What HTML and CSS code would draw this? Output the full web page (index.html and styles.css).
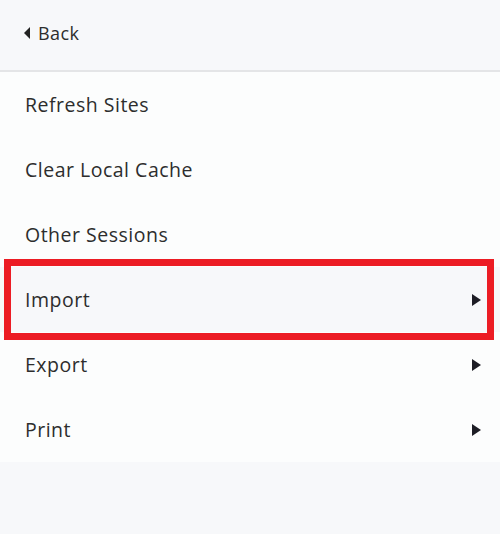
FILE: index.html
```html
<!DOCTYPE html>
<html>
<head>
<meta charset="utf-8">
<link rel="stylesheet" href="styles.css">
</head>
<body>
<div class="panel">
  <div class="header">
    <span class="back"><span class="tri-left"></span>Back</span>
  </div>
  <ul class="menu">
    <li class="item">Refresh Sites</li>
    <li class="item">Clear Local Cache</li>
    <li class="item">Other Sessions</li>
    <li class="item sub hover">Import<span class="tri-right"></span></li>
    <li class="item sub">Export<span class="tri-right"></span></li>
    <li class="item sub">Print<span class="tri-right"></span></li>
  </ul>
  <div class="highlight"></div>
</div>
</body>
</html>
```
FILE: styles.css
```css
html, body {
  margin: 0;
  padding: 0;
  background: #f7f8fa;
}
body {
  font-family: "Open Sans", "Noto Sans", sans-serif;
  color: #2d2d2d;
}
.panel {
  position: relative;
  width: 500px;
  height: 534px;
}
.header {
  box-sizing: border-box;
  border-bottom: 2px solid #e4e5e7;
  height: 72px;
  display: flex;
  align-items: center;
  padding-left: 24px;
  padding-bottom: 4px;
}
.back {
  display: flex;
  align-items: center;
  font-size: 18px;
  letter-spacing: 0.4px;
  color: #2d2d2d;
}
.tri-left {
  width: 0;
  height: 0;
  border-top: 6.5px solid transparent;
  border-bottom: 6.5px solid transparent;
  border-right: 6px solid #222;
  margin-right: 8px;
}
.menu {
  list-style: none;
  margin: 0;
  padding: 0;
  background: #fcfdfd;
}
.item {
  height: 65px;
  display: flex;
  align-items: center;
  justify-content: space-between;
  padding: 0 19px 0 25px;
  font-size: 19.5px;
  letter-spacing: 0.5px;
}
.item.hover {
  background: #f7f8fa;
}
.tri-right {
  width: 0;
  height: 0;
  border-top: 6.5px solid transparent;
  border-bottom: 6.5px solid transparent;
  border-left: 9px solid #1d1d25;
}
.highlight {
  position: absolute;
  left: 4px;
  top: 259px;
  width: 490px;
  height: 81px;
  box-sizing: border-box;
  border: 7px solid #ec1c24;
}
```
